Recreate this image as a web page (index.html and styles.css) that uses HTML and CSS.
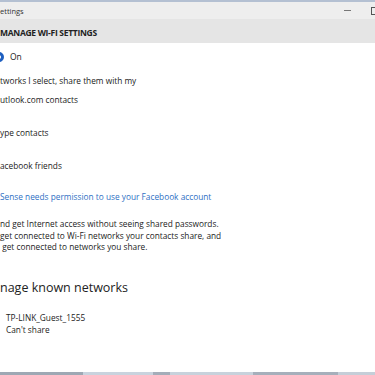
FILE: index.html
```html
<!DOCTYPE html>
<html>
<head>
<meta charset="utf-8">
<link rel="stylesheet" href="styles.css">
</head>
<body>
<div class="window">
  <div class="titlebar">
    <span class="title">ettings</span>
    <span class="controls">
      <span class="min"></span>
      <span class="max"></span>
    </span>
  </div>
  <div class="header"><span class="header-text">MANAGE WI-FI SETTINGS</span></div>
  <div class="content">
    <div class="on"><span class="radio"></span><span>On</span></div>
    <div class="p1">tworks I select, share them with my</div>
    <div class="p2">utlook.com contacts</div>
    <div class="p3">ype contacts</div>
    <div class="p4">acebook friends</div>
    <div class="link">Sense needs permission to use your Facebook account</div>
    <div class="para">nd get Internet access without seeing shared passwords.<br>get connected to Wi-Fi networks your contacts share, and<br>&nbsp;get connected to networks you share.</div>
    <div class="heading">nage known networks</div>
    <div class="net">TP-LINK_Guest_1555<br>Can't share</div>
  </div>
  <div class="taskbar">
    <span class="tb tb1"></span><span class="tb tb2"></span><span class="tb tb3"></span><span class="tb tb4"></span><span class="tb tb5"></span><span class="tb tb6"></span>
  </div>
</div>
</body>
</html>
```
FILE: styles.css
```css
html, body {
  margin: 0;
  padding: 0;
  width: 375px;
  height: 375px;
  overflow: hidden;
  background: #ffffff;
}
.window {
  width: 375px;
  height: 375px;
  display: flex;
  flex-direction: column;
  font-family: "Open Sans", "Noto Sans", sans-serif;
  color: #1f1f1f;
}
.titlebar {
  height: 17px;
  border-top: 2px solid #b4c0d2;
  background: #eeeeee;
  display: flex;
  align-items: center;
  justify-content: space-between;
  flex: none;
}
.title {
  font-size: 7.5px;
  color: #333;
  margin-left: 0;
}
.controls {
  display: flex;
  align-items: center;
  gap: 20px;
  margin-right: -4px;
}
.min {
  width: 7px;
  height: 1px;
  background: #777;
}
.max {
  width: 8px;
  height: 8px;
  border: 1px solid #555;
  box-sizing: border-box;
}
.header {
  height: 24px;
  background: #e5e5e5;
  display: flex;
  align-items: center;
  padding-top: 3px;
  box-sizing: border-box;
  flex: none;
}
.header-text {
  font-size: 8.5px;
  font-weight: 700;
  color: #222;
  margin-left: 0;
  letter-spacing: -0.3px;
}
.content {
  flex: 1;
  font-size: 8.3px;
  color: #222;
}
.on {
  margin-top: 7px;
  height: 14px;
  line-height: 14px;
  display: flex;
  align-items: center;
  gap: 6px;
  font-size: 8.5px;
}
.radio {
  width: 10px;
  height: 10px;
  margin-left: -6px;
  border-radius: 50%;
  box-sizing: border-box;
  border: 3px solid #1e5fc0;
  background: #ffffff;
}
.p1, .p2, .p3, .p4, .link {
  line-height: 14px;
  height: 14px;
  white-space: nowrap;
}
.p1 { margin-top: 10px; }
.p2 { margin-top: 5px; }
.p3 { margin-top: 19px; }
.p4 { margin-top: 19px; }
.link {
  margin-top: 17px;
  color: #2e6fc4;
}
.para {
  margin-top: 14px;
  line-height: 11.5px;
  white-space: nowrap;
}
.heading {
  margin-top: 25px;
  font-size: 12.5px;
  line-height: 20px;
  font-weight: 400;
  color: #222;
}
.net {
  margin-top: 14px;
  margin-left: 6px;
  line-height: 12px;
}
.taskbar {
  height: 3px;
  flex: none;
  display: flex;
  background: #a9b2bd;
}
.tb { height: 3px; }
.tb1 { width: 83px; background: #9ea8b4; }
.tb2 { width: 70px; background: #c9d3de; }
.tb3 { width: 17px; background: #a4adb9; }
.tb4 { width: 83px; background: #c8d2dc; }
.tb5 { width: 85px; background: #a6afbb; }
.tb6 { width: 37px; background: #c5ced8; }
```
